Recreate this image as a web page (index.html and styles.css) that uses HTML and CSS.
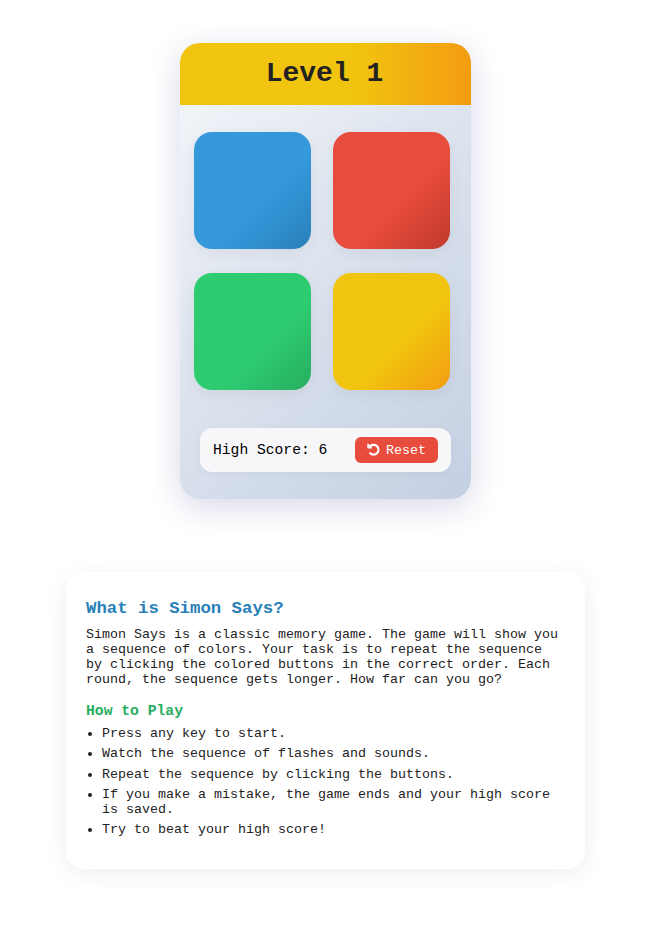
FILE: index.html
```html
<!DOCTYPE html>
<html lang="en">
<head>
<meta charset="utf-8">
<title>Simon Says</title>
<link rel="stylesheet" href="styles.css">
</head>
<body>
<main class="game">
  <header class="level"><h1>Level 1</h1></header>
  <div class="board">
    <div class="pad blue"></div>
    <div class="pad red"></div>
    <div class="pad green"></div>
    <div class="pad yellow"></div>
  </div>
  <div class="score">
    <span>High Score: 6</span>
    <button class="reset"><svg class="icon" viewBox="0 0 13 13"><path d="M2.600 3.900A4.900 4.900 0 1 1 3.100 10.200" fill="none" stroke="currentColor" stroke-width="2.100" stroke-linecap="round"/><path d="M.3.900C.3.400.8.200 1.100.6L5 4.500c.3.400.1.900-.4.900H.9C.5 5.400.3 5.200.3 4.800z" fill="currentColor"/></svg>Reset</button>
  </div>
</main>
<section class="info">
  <h2>What is Simon Says?</h2>
  <p>Simon Says is a classic memory game. The game will show you a sequence of colors. Your task is to repeat the sequence by clicking the colored buttons in the correct order. Each round, the sequence gets longer. How far can you go?</p>
  <h3>How to Play</h3>
  <ul>
    <li>Press any key to start.</li>
    <li>Watch the sequence of flashes and sounds.</li>
    <li>Repeat the sequence by clicking the buttons.</li>
    <li>If you make a mistake, the game ends and your high score is saved.</li>
    <li>Try to beat your high score!</li>
  </ul>
</section>
</body>
</html>
```
FILE: styles.css
```css
* { box-sizing: border-box; }
body {
  margin: 0;
  padding-top: 43px;
  min-height: 937px;
  background: #fff;
  color: #222;
  font-family: "Courier New", "Liberation Mono", monospace;
}
.game {
  width: 291px;
  height: 456px;
  margin: 0 0 0 180px;
  border-radius: 20px;
  overflow: hidden;
  background: linear-gradient(135deg, #f5f7fa 0%, #c3cfe2 100%);
  box-shadow: 0 8px 32px rgba(31, 38, 135, 0.18);
}
.level {
  height: 62px;
  display: flex;
  align-items: center;
  justify-content: center;
  padding-right: 2px;
  background: linear-gradient(90deg, #f1c40f 60%, #f39c12 100%);
}
.level h1 { margin: 0; font-size: 28px; line-height: 32px; }
.board {
  display: grid;
  grid-template-columns: 117px 117px;
  gap: 24px 22px;
  padding: 27px 14px 0;
}
.pad {
  height: 117px;
  border-radius: 18px;
  box-shadow: 0 4px 16px rgba(0, 0, 0, 0.06);
}
.blue { background: linear-gradient(135deg, #3498db 60%, #2980b9 100%); }
.red { background: linear-gradient(135deg, #e74c3c 60%, #c0392b 100%); }
.green { background: linear-gradient(135deg, #2ecc71 60%, #27ae60 100%); }
.yellow { background: linear-gradient(135deg, #f1c40f 60%, #f39c12 100%); }
.score {
  display: flex;
  align-items: center;
  justify-content: space-between;
  height: 44px;
  margin: 38px 20px 0;
  padding: 0 13px;
  border-radius: 12px;
  background: #f7f7fa;
  box-shadow: 0 2px 8px rgba(0, 0, 0, 0.04);
  color: #000;
  font-size: 14.67px;
}
.reset {
  display: flex;
  align-items: center;
  justify-content: center;
  gap: 6px;
  width: 83px;
  height: 26px;
  padding: 0;
  border: 0;
  border-radius: 6px;
  background: #e74c3c;
  color: #fff;
  font: 13.33px "Courier New", "Liberation Mono", monospace;
}
.icon { width: 13px; height: 13px; margin-bottom: 2px; }
.info {
  width: 519px;
  height: 297px;
  margin: 73px 0 0 66px;
  padding: 27px 20px;
  border-radius: 18px;
  background: #fff;
  box-shadow: 0 4px 24px rgba(0, 0, 0, 0.07);
  font-size: 13.33px;
  line-height: 15px;
}
.info h2 { margin: 0 0 9px; font-size: 17.33px; line-height: 19px; color: #2980b9; }
.info p { margin: 0; }
.info h3 { margin: 16px 0 6px; font-size: 14.7px; line-height: 17px; color: #27ae60; }
.info ul { margin: 0; padding-left: 16px; }
.info li { margin-bottom: 5.33px; }
```
